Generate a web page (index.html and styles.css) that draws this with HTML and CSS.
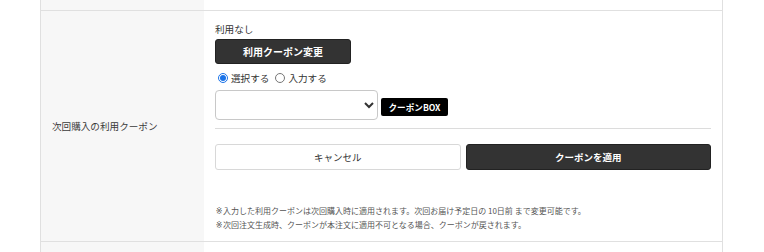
FILE: index.html
```html
<!DOCTYPE html>
<html lang="ja">
<head>
    <meta charset="UTF-8">
    <meta name="viewport" content="width=device-width, initial-scale=1.0">
    <title>次回購入の利用クーポン</title>
    <link rel="stylesheet" href="styles.css">
</head>
<body>
    <div class="form-table">
        <!-- previous row (cut off) -->
        <div class="row row-stub">
            <div class="cell-label"></div>
            <div class="cell-value"></div>
        </div>

        <div class="row">
            <div class="cell-label">次回購入の利用クーポン</div>
            <div class="cell-value">
                <p class="current">利用なし</p>
                <button type="button" class="btn-dark btn-change">利用クーポン変更</button>

                <div class="radios">
                    <label><input type="radio" name="mode" checked> 選択する</label>
                    <label><input type="radio" name="mode"> 入力する</label>
                </div>

                <div class="coupon-select">
                    <select id="couponSelect">
                        <option value=""></option>
                    </select>
                    <button type="button" class="btn-box">クーポンBOX</button>
                </div>

                <hr class="divider">

                <div class="actions">
                    <button type="button" class="btn-light">キャンセル</button>
                    <button type="button" class="btn-dark">クーポンを適用</button>
                </div>

                <div class="notes">
                    <p><span class="mark">※</span>入力した利用クーポンは次回購入時に適用されます。次回お届け予定日の 10日前 まで変更可能です。</p>
                    <p><span class="mark">※</span>次回注文生成時、クーポンが本注文に適用不可となる場合、クーポンが戻されます。</p>
                </div>
            </div>
        </div>

        <!-- next row (cut off) -->
        <div class="row row-stub">
            <div class="cell-label"></div>
            <div class="cell-value"></div>
        </div>
    </div>
</body>
</html>
```

FILE: styles.css
```css
body {
    font-family: "Noto Sans CJK JP", "Noto Sans", sans-serif;
    background-color: #fff;
    color: #333;
    margin: 0;
    padding: 0;
}

.form-table {
    width: 681px;
    margin-left: 40px;
    border-left: 1px solid #e0e0e0;
    border-right: 1px solid #e0e0e0;
}

.row {
    display: flex;
    border-bottom: 1px solid #e0e0e0;
}

.row:last-child {
    border-bottom: none;
}

.row-stub {
    height: 10px;
}

.row-stub:last-child {
    height: 11px;
}

.cell-label {
    width: 163px;
    flex-shrink: 0;
    background-color: #f7f7f7;
    display: flex;
    align-items: center;
    padding-left: 11px;
    box-sizing: border-box;
    font-size: 9.6px;
    color: #3a3a3a;
}

.cell-value {
    flex: 1;
    padding: 11px 11px 9px 11px;
}

.current {
    margin: 0;
    font-size: 9.6px;
    line-height: 14px;
}

button {
    font-family: inherit;
    cursor: pointer;
}

.btn-dark {
    background-color: #333;
    color: #fff;
    border: 1px solid #222;
    border-radius: 3px;
    font-size: 9.5px;
    font-weight: bold;
}

.btn-change {
    display: block;
    width: 136px;
    height: 25px;
    margin-top: 3px;
    font-size: 10px;
}

.radios {
    display: flex;
    gap: 6px;
    margin-top: 6px;
    margin-left: 3px;
    font-size: 9.6px;
    line-height: 16px;
}

.radios label {
    display: flex;
    align-items: center;
    gap: 3px;
}

.radios input {
    width: 10px;
    height: 10px;
    margin: 0;
    accent-color: #1a73e8;
}

.coupon-select {
    display: flex;
    align-items: flex-end;
    gap: 3px;
    margin-top: 4px;
}

.coupon-select select {
    width: 163px;
    height: 30px;
    border: 1px solid #c8c8c8;
    border-radius: 4px;
    background-color: #fff;
    font-family: inherit;
    font-size: 10px;
    color: #333;
}

.btn-box {
    background-color: #000;
    color: #fff;
    border: none;
    border-radius: 2px;
    height: 18px;
    width: 67px;
    padding: 0;
    margin-bottom: 4px;
    font-size: 8.6px;
    font-weight: bold;
}

.divider {
    border: none;
    border-top: 1px solid #dcdcdc;
    margin: 8px 0 0 0;
}

.actions {
    display: flex;
    gap: 5px;
    margin-top: 15px;
}

.actions button {
    flex: 1;
    height: 26px;
}

.btn-light {
    background-color: #fff;
    color: #333;
    border: 1px solid #d8d8d8;
    border-radius: 3px;
    font-size: 9.5px;
}

.notes {
    margin-top: 34px;
    font-size: 8px;
    line-height: 13px;
    color: #555;
}

.notes p {
    margin: 0;
}

.notes .mark {
    font-family: "DejaVu Sans", sans-serif;
    font-variant-emoji: text;
    display: inline-block;
    width: 8px;
    text-align: center;
}
```
